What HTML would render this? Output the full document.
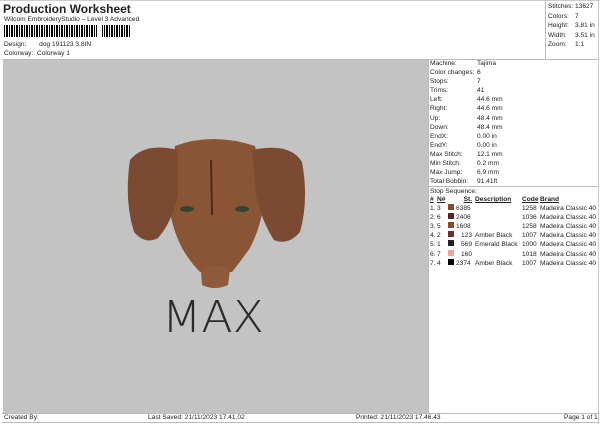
<!DOCTYPE html><html><head><style>
*{margin:0;padding:0;box-sizing:border-box}
body{width:600px;height:424px;background:#fff;font-family:"Liberation Sans",sans-serif;font-size:7px;color:#222;position:relative;overflow:hidden}
.a{position:absolute;white-space:nowrap}
table{border-collapse:collapse;font-size:6.6px;table-layout:fixed;width:168px}
td{padding:0;height:9.1px;line-height:9.1px;overflow:hidden;white-space:nowrap}
</style></head><body>
<div class="a" style="left:3px;top:2px;font-size:12px;font-weight:bold">Production Worksheet</div>
<div class="a" style="left:4px;top:16px;font-size:6.6px">Wilcom EmbroideryStudio – Level 3 Advanced</div>
<div class="a" style="left:4px;top:25px;height:12px;width:126px;background:repeating-linear-gradient(90deg,#000 0 1px,#fff 1px 2px,#000 2px 4px,#fff 4px 5px)"></div>
<div class="a" style="left:97px;top:25px;height:12px;width:5px;background:#fff"></div>
<div class="a" style="left:4px;top:41px;font-size:6.6px">Design:&nbsp;&nbsp;&nbsp;&nbsp;&nbsp;&nbsp; dog 191123 3,8IN</div>
<div class="a" style="left:4px;top:50px;font-size:6.6px">Colorway:&nbsp; Colorway 1</div>
<div class="a" style="left:0;top:0;width:600px;height:1px;background:#ccc"></div>
<div class="a" style="left:545px;top:0;width:1px;height:60px;background:#bbb"></div>
<div class="a" style="left:548px;top:2px;line-height:9.6px;font-size:6.6px">Stitches:<br>Colors:<br>Height:<br>Width:<br>Zoom:</div>
<div class="a" style="left:575px;top:2px;line-height:9.6px;font-size:6.6px">13627<br>7<br>3.81 in<br>3.51 in<br>1:1</div>
<div class="a" style="left:2px;top:59px;width:596px;height:1px;background:#bbb"></div>
<div class="a" style="left:3px;top:60px;width:425px;height:353px;background:#c3c3c3"></div>
<svg class="a" style="left:3px;top:60px" width="425" height="353" viewBox="3 60 425 353">
<path d="M175 146 Q 212 132 255 146 L 265 195 Q 262 225 250 248 Q 240 262 232 272 L 200 272 Q 190 262 182 248 Q 170 225 168 195 Z" fill="#8a5535"/>
<path d="M178 150 Q 145 142 130 160 Q 124 200 134 232 Q 145 245 158 238 Q 172 222 178 195 Z" fill="#7a4a33"/>
<path d="M252 150 Q 290 142 302 162 Q 309 200 300 232 Q 288 246 274 240 Q 262 222 256 195 Z" fill="#7a4a33"/>
<path d="M201 270 Q 215 262 230 270 L 228 285 Q 215 291 202 285 Z" fill="#8f5a3a"/>
<path d="M211 160 L 212 215" stroke="#4a2a22" stroke-width="2"/>
<ellipse cx="187" cy="209" rx="7" ry="3" fill="#334433"/>
<ellipse cx="242" cy="209" rx="7" ry="3" fill="#334433"/>
<text x="162" y="332" textLength="102" lengthAdjust="spacingAndGlyphs" font-family="DejaVu Sans" font-weight="200" font-size="44" fill="#2a2a2a">MAX</text>
</svg>
<div class="a" style="left:428px;top:60px;width:1px;height:353px;background:#bbb"></div>
<div class="a" style="left:598px;top:0;width:1px;height:424px;background:#ccc"></div>
<div class="a" style="left:430px;top:59px;line-height:9.1px;font-size:6.6px">Machine:<br>Color changes:<br>Stops:<br>Trims:<br>Left:<br>Right:<br>Up:<br>Down:<br>EndX:<br>EndY:<br>Max Stitch:<br>Min Stitch:<br>Max Jump:<br>Total Bobbin:</div>
<div class="a" style="left:477px;top:59px;line-height:9.1px;font-size:6.6px">Tajima<br>6<br>7<br>41<br>44.6 mm<br>44.6 mm<br>48.4 mm<br>48.4 mm<br>0.00 in<br>0.00 in<br>12.1 mm<br>0.2 mm<br>6.9 mm<br>91.41ft</div>
<div class="a" style="left:429px;top:186px;width:169px;height:1px;background:#bbb"></div>
<div class="a" style="left:430px;top:188px;font-size:6.6px">Stop Sequence:</div>
<table class="a" style="left:430px;top:195px">
<colgroup><col style="width:7px"><col style="width:11px"><col style="width:8px"><col style="width:16px"><col style="width:50px"><col style="width:18px"><col style="width:58px"></colgroup>
<tr style="font-weight:bold;text-decoration:underline"><td>#</td><td>N#</td><td></td><td style="text-align:right">St.</td><td style="padding-left:3px">Description</td><td>Code</td><td>Brand</td></tr>
<tr><td>1.</td><td>3</td><td><i style="display:inline-block;width:6px;height:6px;background:#8a4a2e"></i></td><td>6385</td><td></td><td>1258</td><td>Madeira Classic 40</td></tr>
<tr><td>2.</td><td>6</td><td><i style="display:inline-block;width:6px;height:6px;background:#5a2525"></i></td><td>2406</td><td></td><td>1036</td><td>Madeira Classic 40</td></tr>
<tr><td>3.</td><td>5</td><td><i style="display:inline-block;width:6px;height:6px;background:#8a4a2e"></i></td><td>1608</td><td></td><td>1258</td><td>Madeira Classic 40</td></tr>
<tr><td>4.</td><td>2</td><td><i style="display:inline-block;width:6px;height:6px;background:#6a3030"></i></td><td style="text-align:right">123</td><td style="padding-left:3px">Amber Black</td><td>1007</td><td>Madeira Classic 40</td></tr>
<tr><td>5.</td><td>1</td><td><i style="display:inline-block;width:6px;height:6px;background:#222"></i></td><td style="text-align:right">569</td><td style="padding-left:3px">Emerald Black</td><td>1000</td><td>Madeira Classic 40</td></tr>
<tr><td>6.</td><td>7</td><td><i style="display:inline-block;width:6px;height:6px;background:#e8a8a0"></i></td><td style="text-align:right">160</td><td></td><td>1018</td><td>Madeira Classic 40</td></tr>
<tr><td>7.</td><td>4</td><td><i style="display:inline-block;width:6px;height:6px;background:#000"></i></td><td>2374</td><td style="padding-left:3px">Amber Black</td><td>1007</td><td>Madeira Classic 40</td></tr>
</table>
<div class="a" style="left:2px;top:413px;width:597px;height:1px;background:#bbb"></div>
<div class="a" style="left:2px;top:422px;width:597px;height:1px;background:#bbb"></div>
<div class="a" style="left:4px;top:414px;font-size:6.6px">Created By:</div>
<div class="a" style="left:148px;top:414px;font-size:6.6px">Last Saved: 21/11/2023 17.41.02</div>
<div class="a" style="left:356px;top:414px;font-size:6.6px">Printed: 21/11/2023 17.46.43</div>
<div class="a" style="left:564px;top:414px;font-size:6.6px">Page 1 of 1</div>
</body></html>
